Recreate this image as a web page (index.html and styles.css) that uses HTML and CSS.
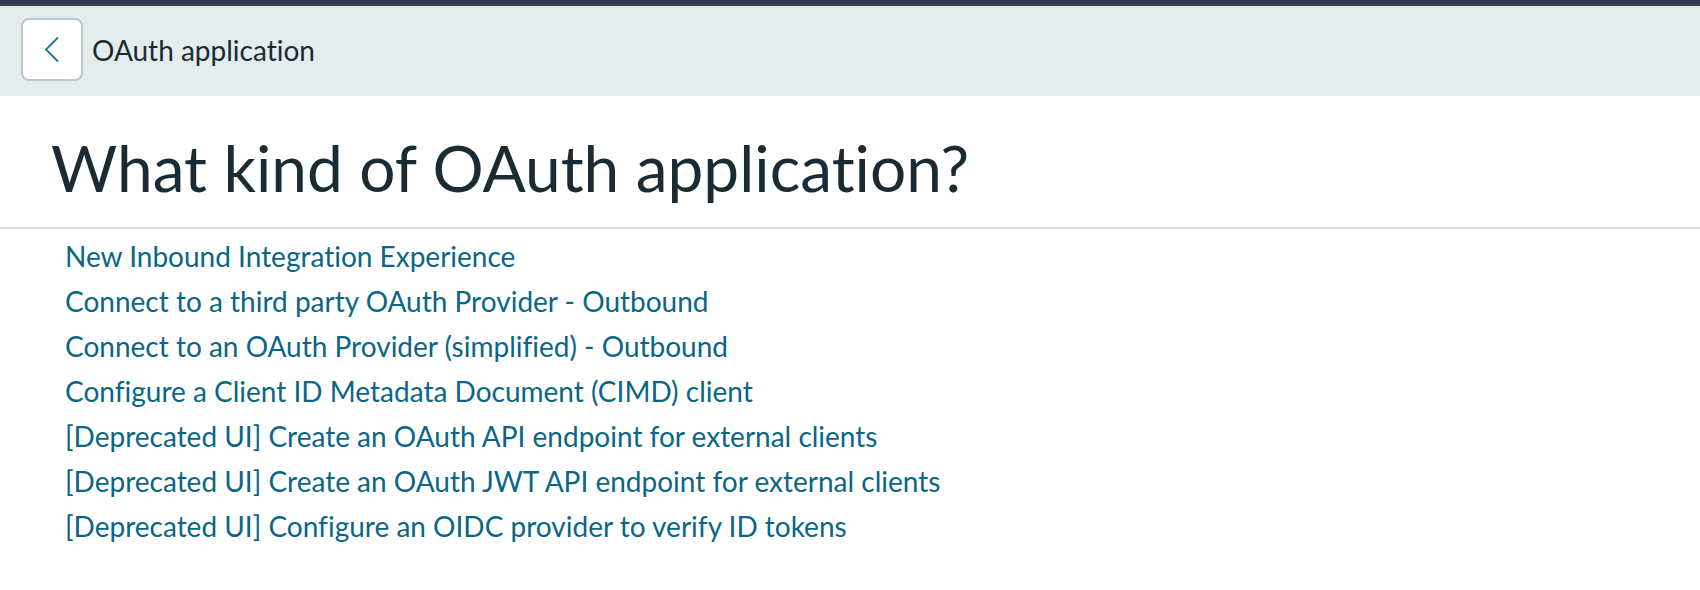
FILE: index.html
```html
<!DOCTYPE html>
<html lang="en">
<head>
    <meta charset="UTF-8">
    <meta name="viewport" content="width=device-width, initial-scale=1.0">
    <title>OAuth application</title>
    <link rel="stylesheet" href="styles.css">
</head>
<body>
    <div class="topbar"></div>
    <div class="header">
        <a class="back-btn" href="#" aria-label="Back">
            <svg width="16" height="27" viewBox="0 0 16 27">
                <polyline points="14,1.5 2,13.5 14,25.5" fill="none" stroke="#1b7492" stroke-width="1.8"/>
            </svg>
        </a>
        <span class="header-title">OAuth application</span>
    </div>
    <div class="page-title">
        <h1>What kind of OAuth application?</h1>
    </div>
    <ul class="options">
        <li><a href="#">New Inbound Integration Experience</a></li>
        <li><a href="#">Connect to a third party OAuth Provider - Outbound</a></li>
        <li><a href="#">Connect to an OAuth Provider (simplified) - Outbound</a></li>
        <li><a href="#">Configure a Client ID Metadata Document (CIMD) client</a></li>
        <li><a href="#">[Deprecated UI] Create an OAuth API endpoint for external clients</a></li>
        <li><a href="#">[Deprecated UI] Create an OAuth JWT API endpoint for external clients</a></li>
        <li><a href="#">[Deprecated UI] Configure an OIDC provider to verify ID tokens</a></li>
    </ul>
</body>
</html>
```

FILE: styles.css
```css
body {
    font-family: Lato, "Open Sans", sans-serif;
    font-variant-ligatures: no-common-ligatures;
    margin: 0;
    padding: 0;
    background-color: #fff;
    color: #1b2b33;
}
.topbar {
    height: 4px;
    background-color: #353a52;
    border-bottom: 2px solid #3d414b;
}
.header {
    display: flex;
    align-items: center;
    gap: 9px;
    height: 90px;
    padding-left: 21px;
    background-color: #e4ecee;
}
.back-btn {
    box-sizing: border-box;
    display: flex;
    align-items: center;
    justify-content: center;
    width: 62px;
    height: 63px;
    background-color: #fff;
    border: 2px solid #b8c8cd;
    border-radius: 8px;
    margin-top: -3px;
}
.header-title {
    font-size: 28px;
    margin-top: -3px;
}
.page-title {
    padding: 22px 51px 0;
    height: 109px;
    border-bottom: 2px solid #dcdcdc;
}
h1 {
    margin: 0;
    font-size: 64px;
    font-weight: 400;
    line-height: 100px;
}
.options {
    list-style: none;
    margin: 0;
    padding: 5px 0 0 65px;
}
.options li {
    font-size: 28px;
    line-height: 45px;
}
.options a {
    color: #0a6684;
    text-decoration: none;
}
```
